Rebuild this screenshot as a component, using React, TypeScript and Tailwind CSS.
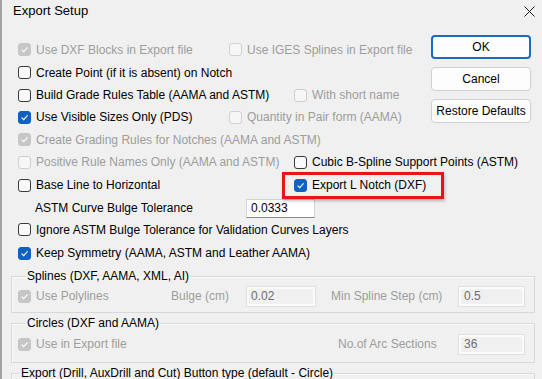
import React from "react";

function Box({ checked = false, disabled = false }: { checked?: boolean; disabled?: boolean }) {
  let cls = "bg-[#f9f9f9] border border-[#3a3a3a]";
  if (checked && !disabled) cls = "bg-[#0f62c4] border border-[#0f62c4]";
  else if (checked && disabled) cls = "bg-[#c6c6c6] border border-[#c6c6c6]";
  else if (disabled) cls = "bg-[#f6f6f6] border border-[#cfcfcf]";
  return (
    <span className={`w-[13px] h-[13px] rounded-[3px] shrink-0 flex items-center justify-center ${cls}`}>
      {checked && (
        <svg width="9" height="9" viewBox="0 0 9 9">
          <path d="M1.6 4.7 L3.7 6.7 L7.6 2.3" stroke="white" strokeWidth="1.1" fill="none" />
        </svg>
      )}
    </span>
  );
}

function Check({
  label,
  checked = false,
  disabled = false,
  className = "",
}: {
  label: string;
  checked?: boolean;
  disabled?: boolean;
  className?: string;
}) {
  return (
    <div className={`flex items-center gap-[5px] whitespace-nowrap shrink-0 ${className}`}>
      <Box checked={checked} disabled={disabled} />
      <span className={disabled ? "text-[#9d9d9d]" : "text-black"}>{label}</span>
    </div>
  );
}

function Btn({ label, primary = false }: { label: string; primary?: boolean }) {
  return (
    <div
      className={`w-[100px] h-[24px] rounded-[4px] bg-[#fdfdfd] flex items-center justify-center text-black ${
        primary ? "border-2 border-[#1a6cc2]" : "border border-[#d0d0d0]"
      }`}
    >
      {label}
    </div>
  );
}

function DisInput({ value }: { value: string }) {
  return (
    <div className="w-[67px] h-[21px] bg-[#f0f0f0] border border-[#e0e0e0] shadow-[inset_0_0_0_2px_#fbfbfb] flex items-center pl-[5px] text-[#6e6e6e]">
      {value}
    </div>
  );
}

export default function App() {
  return (
    <div className="relative w-[542px] h-[379px] overflow-hidden bg-[#f0f0f0] border-l-2 border-[#a3a3a3] font-['Liberation_Sans',Arial,sans-serif] text-[12px] leading-[14px]">
      {/* title bar */}
      <div className="h-[22px] flex items-center justify-between pl-[11px] pr-[7px]">
        <span className="text-[13px] text-black">Export Setup</span>
        <svg width="11" height="11" viewBox="0 0 11 11">
          <path d="M0.5 0.5 L10.5 10.5 M10.5 0.5 L0.5 10.5" stroke="#1a1a1a" strokeWidth="1" />
        </svg>
      </div>

      <div className="flex">
        <div className="w-[429px] shrink-0 pt-[16px] pl-[16px] flex flex-col">
          <div className="h-[23px] flex items-center">
            <Check label="Use DXF Blocks in Export file" checked disabled className="w-[211px]" />
            <Check label="Use IGES Splines in Export file" disabled />
          </div>
          <div className="h-[23px] flex items-center">
            <Check label="Create Point (if it is absent) on Notch" />
          </div>
          <div className="h-[22px] flex items-center">
            <Check label="Build Grade Rules Table (AAMA and ASTM)" className="w-[276px]" />
            <Check label="With short name" disabled />
          </div>
          <div className="h-[22px] flex items-center">
            <Check label="Use Visible Sizes Only (PDS)" checked className="w-[211px]" />
            <Check label="Quantity in Pair form (AAMA)" disabled />
          </div>
          <div className="h-[23px] flex items-center">
            <Check label="Create Grading Rules for Notches (AAMA and ASTM)" checked disabled />
          </div>
          <div className="h-[22px] flex items-center">
            <Check label="Positive Rule Names Only (AAMA and ASTM)" disabled className="w-[276px]" />
            <Check label="Cubic B-Spline Support Points (ASTM)" />
          </div>
          <div className="h-[24px] flex items-center">
            <Check label="Base Line to Horizontal" className="w-[276px]" />
            <Check label="Export L Notch (DXF)" checked />
          </div>
          <div className="h-[22px] flex items-center">
            <span className="w-[228px] pl-[17px] shrink-0 text-black whitespace-nowrap">ASTM Curve Bulge Tolerance</span>
            <div className="w-[69px] h-[19px] bg-white border border-[#d4d4d4] border-b-[#8a8a8a] flex items-center pl-[4px] text-black">
              0.0333
            </div>
          </div>
          <div className="h-[21px] flex items-center">
            <Check label="Ignore ASTM Bulge Tolerance for Validation Curves Layers" />
          </div>
          <div className="h-[26px] flex items-center">
            <Check label="Keep Symmetry (AAMA, ASTM and Leather AAMA)" checked />
          </div>
        </div>

        <div className="shrink-0 pt-[13px] flex flex-col gap-[8px]">
          <Btn label="OK" primary />
          <Btn label="Cancel" />
          <Btn label="Restore Defaults" />
        </div>
      </div>

      <fieldset className="ml-[9px] mt-[3px] w-[524px] border border-[#d8d8d8] shadow-[inset_1px_1px_0_#fbfbfb] pl-[6px] pt-[3px] pb-[6px]">
        <legend className="ml-[8px] px-[1px] text-black">Splines (DXF, AAMA, XML, AI)</legend>
        <div className="h-[20px] flex items-center">
          <Check label="Use Polylines" checked disabled className="w-[153px]" />
          <span className="w-[75px] shrink-0 text-[#9d9d9d]">Bulge (cm)</span>
          <div className="w-[70px] h-[21px] bg-[#f0f0f0] border border-[#e0e0e0] shadow-[inset_0_0_0_2px_#fbfbfb] flex items-center pl-[4px] text-[#6e6e6e]">
            0.02
          </div>
          <span className="w-[142px] pl-[15px] shrink-0 text-[#9d9d9d] whitespace-nowrap">Min Spline Step (cm)</span>
          <DisInput value="0.5" />
        </div>
      </fieldset>

      <fieldset className="ml-[9px] mt-[3px] w-[524px] border border-[#d8d8d8] shadow-[inset_1px_1px_0_#fbfbfb] pl-[6px] pt-[4px] pb-[8px]">
        <legend className="ml-[8px] px-[1px] text-black">Circles (DXF and AAMA)</legend>
        <div className="h-[20px] flex items-center">
          <Check label="Use in Export file" checked disabled className="w-[320px]" />
          <span className="w-[120px] shrink-0 text-[#9d9d9d] whitespace-nowrap">No.of Arc Sections</span>
          <DisInput value="36" />
        </div>
      </fieldset>

      <fieldset className="ml-[9px] mt-[3px] w-[524px] h-[40px] border border-[#d8d8d8] shadow-[inset_1px_1px_0_#fbfbfb]">
        <legend className="ml-[8px] px-[1px] text-black">Export (Drill, AuxDrill and Cut) Button type (default - Circle)</legend>
      </fieldset>

      <div className="absolute left-[280px] top-[172px] w-[162px] h-[27px] border-[3px] border-[#e8141b] shadow-[1px_2px_3px_rgba(0,0,0,0.25)]" />
    </div>
  );
}
